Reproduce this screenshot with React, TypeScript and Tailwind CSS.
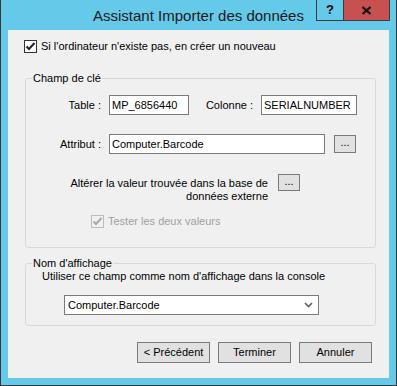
import React from "react";

function Check({ disabled = false }: { disabled?: boolean }) {
  return (
    <span
      className={
        disabled
          ? "flex h-[13px] w-[13px] shrink-0 items-center justify-center border border-[#bcbcbc] bg-[#f0f0f0]"
          : "flex h-[13px] w-[13px] shrink-0 items-center justify-center border border-[#333333] bg-white"
      }
    >
      <svg width="11" height="11" viewBox="0 0 11 11">
        <path
          d="M1.5 5.5 L4 8 L9.5 2"
          fill="none"
          stroke={disabled ? "#a8a8a8" : "#222222"}
          strokeWidth="2"
        />
      </svg>
    </span>
  );
}

function Field({ value, w }: { value: string; w: string }) {
  return (
    <div className={`flex h-[20px] items-center border border-[#7a7a7a] bg-white pl-[2px] ${w}`}>
      {value}
    </div>
  );
}

function DotsButton({ h }: { h: string }) {
  return (
    <button className={`flex w-[22px] items-center justify-center border border-[#7a7a7a] bg-[#e1e1e1] pb-[3px] text-[11px] ${h}`}>
      ...
    </button>
  );
}

function DialogButton({ label, w }: { label: string; w: string }) {
  return (
    <button className={`flex h-[21px] items-center justify-center border border-[#7a7a7a] bg-[#e1e1e1] text-[11px] text-black ${w}`}>
      {label}
    </button>
  );
}

export default function App() {
  return (
    <div className="flex h-[386px] w-[397px] flex-col border-x border-b border-[#383838] bg-[#65c9ea] font-['Liberation_Sans',Arial,sans-serif]">
      {/* title bar */}
      <div className="grid h-[30px] shrink-0 grid-cols-[1fr_auto_1fr]">
        <div />
        <div className="self-center pt-[1px] text-[15px] leading-[18px] text-[#1a1a1a]">
          Assistant Importer des données
        </div>
        <div className="flex justify-end pr-[6px]">
          <div className="flex h-[21px]">
            <div className="flex w-[28px] items-center justify-center border border-t-0 border-[#3c3c3c] text-[13px] font-bold text-black">
              ?
            </div>
            <div className="flex w-[46px] items-center justify-center border border-l-0 border-t-0 border-[#3c3c3c] bg-[#c75050]">
              <svg width="11" height="9" viewBox="0 0 11 9">
                <path d="M1.5 1 L9.5 8 M9.5 1 L1.5 8" stroke="#111" strokeWidth="2.2" />
              </svg>
            </div>
          </div>
        </div>
      </div>

      {/* client */}
      <div className="mx-[7px] mb-[7px] flex flex-1 flex-col bg-[#f0f0f0] text-[11px] leading-[13px] text-black">
        <div className="ml-[16px] mt-[10px] flex items-center gap-[4px]">
          <Check />
          <span>Si l'ordinateur n'existe pas, en créer un nouveau</span>
        </div>

        <fieldset className="ml-[17px] mr-[13px] mt-[18px] rounded-[3px] border border-[#d9d9d9] pb-[19px]">
          <legend className="ml-[6px] px-[1px] leading-[14px]">Champ de clé</legend>
          <div className="mt-[10px] flex items-center">
            <span className="w-[75px] text-right">Table :</span>
            <div className="ml-[8px]">
              <Field value="MP_6856440" w="w-[80px]" />
            </div>
            <span className="w-[64px] text-right">Colonne :</span>
            <div className="ml-[8px]">
              <Field value="SERIALNUMBER" w="w-[96px]" />
            </div>
          </div>
          <div className="mt-[19px] flex items-center">
            <span className="w-[75px] text-right">Attribut :</span>
            <div className="ml-[8px]">
              <Field value="Computer.Barcode" w="w-[216px]" />
            </div>
            <div className="ml-[9px]">
              <DotsButton h="h-[18px]" />
            </div>
          </div>
          <div className="mt-[20px] flex items-start">
            <span className="w-[242px] pt-[3px] text-right">
              Altérer la valeur trouvée dans la base de
              <br />
              données externe
            </span>
            <div className="ml-[10px]">
              <DotsButton h="h-[17px]" />
            </div>
          </div>
          <div className="ml-[65px] mt-[12px] flex items-center gap-[4px] text-[#a0a0a0]">
            <Check disabled />
            <span>Tester les deux valeurs</span>
          </div>
        </fieldset>

        <fieldset className="ml-[17px] mr-[13px] mt-[8px] rounded-[3px] border border-[#d9d9d9] pb-[10px]">
          <legend className="ml-[6px] px-[1px] leading-[14px]">Nom d'affichage</legend>
          <div className="pl-[16px]">Utiliser ce champ comme nom d'affichage dans la console</div>
          <div className="ml-[38px] mt-[12px] flex h-[20px] w-[255px] items-center justify-between border border-[#7a7a7a] bg-white pl-[3px] pr-[5px]">
            <span>Computer.Barcode</span>
            <svg width="9" height="6" viewBox="0 0 9 6">
              <path d="M1 1 L4.5 4.5 L8 1" fill="none" stroke="#606060" strokeWidth="1.6" />
            </svg>
          </div>
        </fieldset>

        <div className="mr-[17px] mt-[16px] flex justify-end gap-[8px]">
          <DialogButton label="< Précédent" w="w-[73px]" />
          <DialogButton label="Terminer" w="w-[73px]" />
          <DialogButton label="Annuler" w="w-[73px]" />
        </div>
      </div>
    </div>
  );
}
